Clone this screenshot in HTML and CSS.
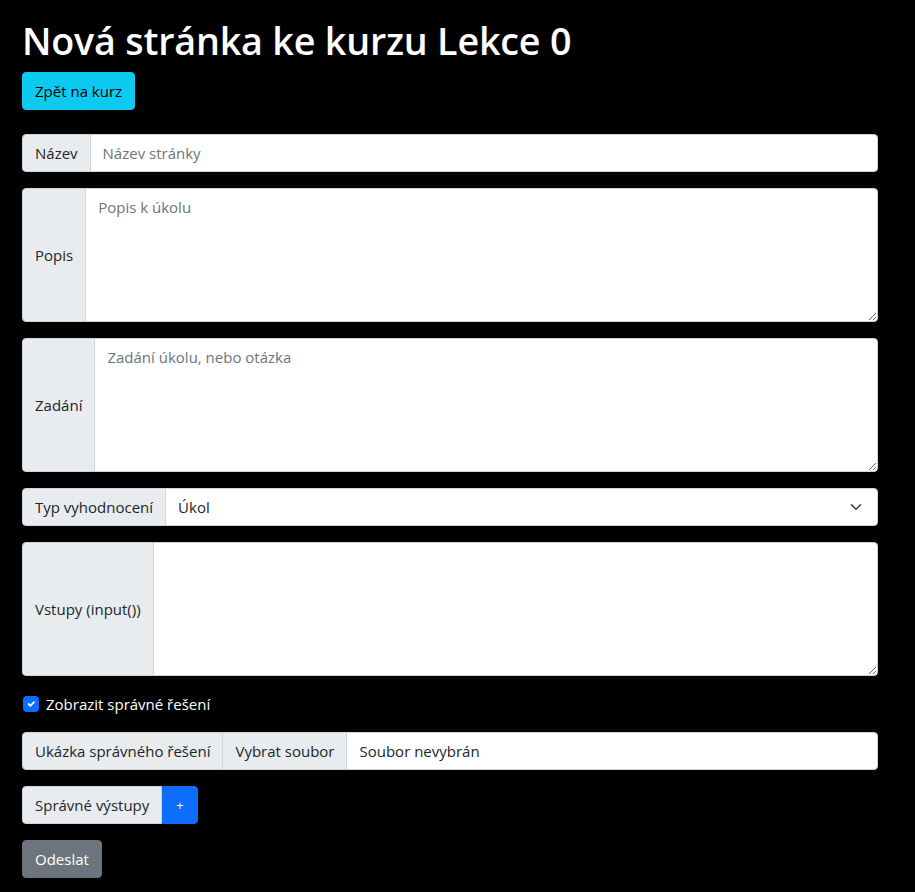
FILE: index.html
```html
<!DOCTYPE html>
<html lang="cs">
<head>
<meta charset="utf-8">
<title>Nová stránka</title>
<link rel="stylesheet" href="styles.css">
</head>
<body>
<main class="page">
  <h1 class="title">Nová stránka ke kurzu Lekce 0</h1>
  <a class="btn btn-info back">Zpět na kurz</a>

  <form class="form">
    <div class="group">
      <span class="addon">Název</span>
      <input class="control" type="text" placeholder="Název stránky">
    </div>
    <div class="group">
      <span class="addon">Popis</span>
      <textarea class="control area" rows="5" placeholder="Popis k úkolu"></textarea>
    </div>
    <div class="group">
      <span class="addon">Zadání</span>
      <textarea class="control area" rows="5" placeholder="Zadání úkolu, nebo otázka"></textarea>
    </div>
    <div class="group">
      <span class="addon">Typ vyhodnocení</span>
      <div class="control select">
        <span>Úkol</span>
        <svg class="chevron" width="12" height="12" viewBox="0 0 16 16"><path d="M2 5l6 6 6-6" fill="none" stroke="#343a40" stroke-width="2" stroke-linecap="round" stroke-linejoin="round"/></svg>
      </div>
    </div>
    <div class="group">
      <span class="addon">Vstupy (input())</span>
      <textarea class="control area" rows="5"></textarea>
    </div>
    <label class="check">
      <span class="box"><svg width="12" height="12" viewBox="0 0 20 20"><path d="M6 10l3 3 6-6" fill="none" stroke="#fff" stroke-width="3" stroke-linecap="round" stroke-linejoin="round"/></svg></span>
      <span>Zobrazit správné řešení</span>
    </label>
    <div class="group">
      <span class="addon">Ukázka správného řešení</span>
      <span class="addon mid">Vybrat soubor</span>
      <div class="control file">Soubor nevybrán</div>
    </div>
    <div class="group inline">
      <span class="addon">Správné výstupy</span>
      <span class="btn btn-primary plus">+</span>
    </div>
    <button type="button" class="btn btn-secondary">Odeslat</button>
  </form>
</main>
</body>
</html>
```
FILE: styles.css
```css
* { box-sizing: border-box; }
html, body { margin: 0; background: #000; }
body {
  font-family: "Open Sans", "Noto Sans", "Liberation Sans", sans-serif;
  font-size: 15px;
  line-height: 24px;
  color: #212529;
}
.page {
  padding: 18px 37px 0 22px;
}
.title {
  margin: 0 0 8px;
  font-size: 37.7px;
  line-height: 46px;
  font-weight: 600;
  color: #fff;
  letter-spacing: -0.2px;
}
.btn {
  display: inline-block;
  padding: 6px 12px;
  border: 1px solid transparent;
  border-radius: 4px;
  font: inherit;
  line-height: 24px;
  cursor: pointer;
  text-decoration: none;
}
.btn-info { background: #0dcaf0; border-color: #0dcaf0; color: #000; }
.btn-primary { background: #0d6efd; border-color: #0d6efd; color: #fff; }
.btn-secondary { background: #6c757d; border-color: #6c757d; color: #fff; }
.back { margin-bottom: 24px; }
.form { display: flex; flex-direction: column; align-items: stretch; }
.group {
  display: flex;
  align-items: stretch;
  margin-bottom: 16px;
}
.group.inline { align-self: flex-start; }
.addon {
  display: flex;
  align-items: center;
  padding: 6px 12px;
  background: #e9ecef;
  border: 1px solid #ced4da;
  color: #212529;
  white-space: nowrap;
  border-radius: 4px 0 0 4px;
}
.addon.mid { border-radius: 0; margin-left: -1px; }
.control {
  flex: 1;
  min-width: 0;
  margin-left: -1px;
  padding: 6px 12px;
  border: 1px solid #ced4da;
  border-radius: 0 4px 4px 0;
  background: #fff;
  font: inherit;
  line-height: 24px;
  color: #212529;
}
.control::placeholder { color: #6c757d; opacity: 1; }
.area { height: 134px; resize: vertical; display: block; }
.select {
  display: flex;
  align-items: center;
  justify-content: space-between;
  padding-right: 15px;
}
.chevron { flex: none; }
.file { color: #212529; }
.plus {
  border-radius: 0 4px 4px 0;
  padding: 6px 13px;
  font-size: 13px;
}
.check {
  display: flex;
  align-items: center;
  gap: 7px;
  color: #fff;
  margin: 0 0 16px 1px;
}
.box {
  width: 16px;
  height: 16px;
  border-radius: 4px;
  background: #0d6efd;
  display: flex;
  align-items: center;
  justify-content: center;
}
.form > .btn { align-self: flex-start; }
```
